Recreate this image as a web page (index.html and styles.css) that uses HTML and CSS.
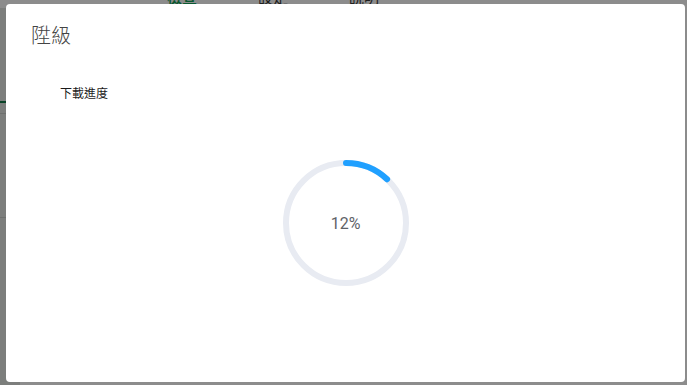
FILE: index.html
```html
<!DOCTYPE html>
<html lang="zh-Hant">
<head>
<meta charset="utf-8">
<title>陞級</title>
<link rel="stylesheet" href="styles.css">
</head>
<body>
<div class="page">
  <div class="tabs">
    <span class="tab active">檢查</span>
    <span class="tab">設定</span>
    <span class="tab">說明</span>
  </div>
  <div class="side">
    <div class="side-item sel"></div>
    <div class="side-item"></div>
    <div class="side-item"></div>
  </div>
</div>
<div class="overlay">
  <div class="dialog">
    <div class="dialog-header">
      <span class="dialog-title">陞級</span>
    </div>
    <div class="dialog-body">
      <div class="label">下載進度</div>
      <div class="progress">
        <svg class="ring" width="126" height="126" viewBox="0 0 126 126">
          <circle class="track" cx="63" cy="63" r="60"></circle>
          <circle class="bar" cx="63" cy="63" r="60" transform="rotate(-90 63 63)"></circle>
        </svg>
        <div class="progress-text">12%</div>
      </div>
    </div>
  </div>
</div>
</body>
</html>
```
FILE: styles.css
```css
html, body {
  margin: 0;
  padding: 0;
  width: 687px;
  height: 385px;
  overflow: hidden;
  background: #ffffff;
  font-family: "Noto Sans CJK TC", "Noto Sans", sans-serif;
}

.page {
  width: 687px;
  height: 385px;
  background: #ffffff;
}

.tabs {
  display: flex;
  height: 8px;
  overflow: hidden;
  align-items: flex-end;
  padding-left: 167px;
  gap: 61px;
}

.tab {
  font-size: 15px;
  line-height: 15px;
  margin-bottom: 4px;
  color: #3a3a3a;
}

.tab.active {
  color: #13a05a;
  font-weight: bold;
}

.side {
  width: 20px;
  height: 377px;
  background: #e2e6e2;
  display: flex;
  flex-direction: column;
  padding-top: 93px;
  box-sizing: border-box;
}

.side-item {
  height: 104px;
  border-top: 1px solid #c8ccc8;
  box-sizing: border-box;
}

.side-item.sel {
  height: 12px;
  border-top: 2px solid #117a47;
}

.overlay {
  position: fixed;
  inset: 0;
  background: rgba(0, 0, 0, 0.45);
  display: flex;
  padding: 4px 2px 3px 6px;
  box-sizing: border-box;
}

.dialog {
  flex: 1;
  background: #ffffff;
  border-radius: 4px;
  display: flex;
  flex-direction: column;
}

.dialog-header {
  padding: 19px 25px 0;
}

.dialog-title {
  font-size: 20px;
  line-height: 24px;
  font-weight: 200;
  color: #444444;
}

.dialog-body {
  display: flex;
  flex-direction: column;
}

.label {
  margin: 37px 0 0 54px;
  font-size: 12px;
  line-height: 16px;
  color: #1a1a1a;
}

.progress {
  position: relative;
  width: 126px;
  height: 126px;
  align-self: center;
  margin-top: 59px;
}

.ring {
  display: block;
}

.track {
  fill: none;
  stroke: #e8ebf2;
  stroke-width: 6;
}

.bar {
  fill: none;
  stroke: #20a0ff;
  stroke-width: 6;
  stroke-linecap: round;
  stroke-dasharray: 45.2 377;
}

.progress-text {
  position: absolute;
  inset: 0;
  display: flex;
  align-items: center;
  justify-content: center;
  font-family: Roboto, "Liberation Sans", sans-serif;
  font-size: 16px;
  color: #5f6368;
}
```
